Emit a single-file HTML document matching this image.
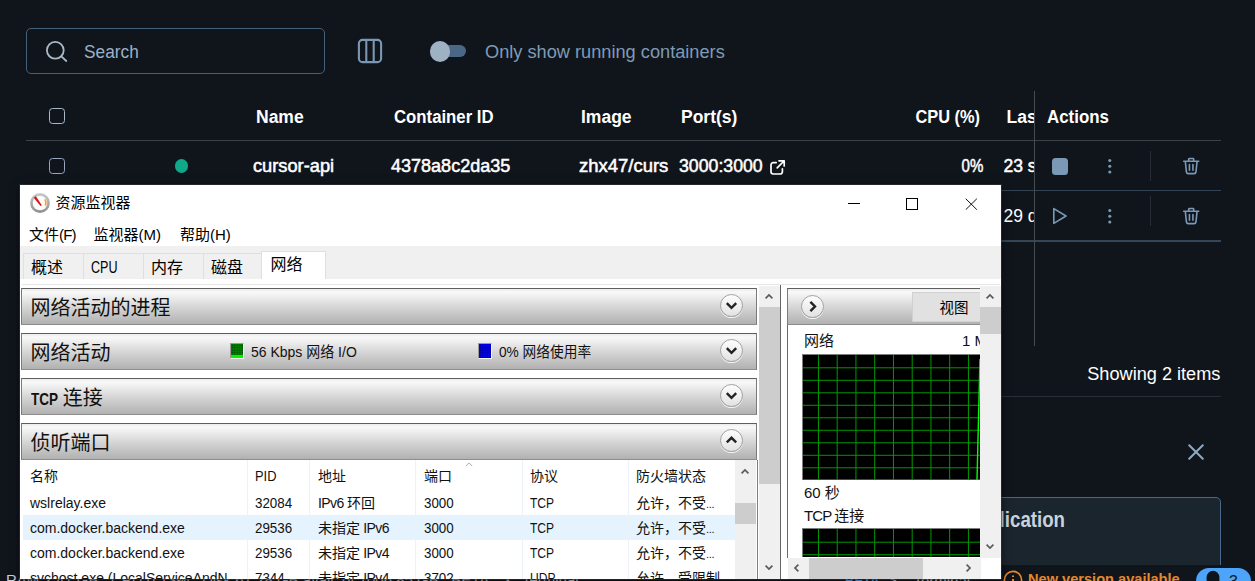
<!DOCTYPE html>
<html lang="zh">
<head>
<meta charset="utf-8">
<title>Containers</title>
<style>
*{box-sizing:border-box;margin:0;padding:0}
html,body{width:1255px;height:581px;overflow:hidden;background:#10151c}
body{position:relative;font-family:"Liberation Sans","Noto Sans CJK SC",sans-serif;color:#fff}
.a{position:absolute;white-space:nowrap}
.t{position:absolute;white-space:nowrap;line-height:20px;height:20px;font-size:17.5px}
.b{font-weight:bold}
.m{font-weight:normal;-webkit-text-stroke:.5px #fff}
/* docker */
.slate{color:#7f9bb5}
.hl{position:absolute;height:1px;background:#3c4148}
/* windows */
#win{position:absolute;left:20px;top:185px;width:981px;height:394px;background:#fff;color:#000;overflow:hidden;box-shadow:0 0 0 1px rgba(60,60,60,.5),0 2px 9px rgba(0,0,0,.55)}
#win .w{position:absolute;white-space:nowrap;font-size:15px;line-height:20px;height:20px;color:#000}
.bar{position:absolute;height:37px;border:1px solid #7b7b7b;border-top-color:#5e5e5e;border-bottom-color:#8d8d8d;background:linear-gradient(#ececec 0%,#f9f9f9 9%,#e9e9e9 28%,#d3d3d3 55%,#b1b1b1 100%)}
.bar .ttl{position:absolute;left:8.5px;top:7px;font-size:20px;line-height:24px;white-space:nowrap;color:#111}
.chev{position:absolute;width:23px;height:23px;border-radius:50%;border:1.3px solid #a2a2a2;background:linear-gradient(#fdfdfd,#e2e2e2);box-shadow:0 1px 0 rgba(255,255,255,.8)}
.chev svg{position:absolute;left:0;top:0}
.tab{position:absolute;top:68px;height:26px;background:#f0f0f0;border:1px solid #dfdfdf;border-bottom:none}
.sb{position:absolute;background:#f0f0f0}
.th{position:absolute;background:#cdcdcd}
.cs{position:absolute;top:275px;width:1px;height:120px;background:#ecf2f8}
.r{position:absolute;white-space:nowrap;font-size:14px;line-height:20px;height:20px;color:#111}
</style>
</head>
<body>
<!-- ================= Docker Desktop background ================= -->
<div class="a" style="left:26px;top:28px;width:299px;height:46px;border:1px solid #456079;border-radius:5px"></div>
<svg class="a" style="left:44px;top:39px" width="26" height="26" viewBox="0 0 26 26"><circle cx="11.3" cy="11.3" r="8.4" fill="none" stroke="#a9b9c8" stroke-width="1.8"/><path d="M17.6 17.6L22.3 22" stroke="#a9b9c8" stroke-width="1.8" stroke-linecap="round"/></svg>
<div class="t" style="left:83.5px;top:41.5px;font-size:18px;color:#9ab0c6;transform:scaleX(.96);transform-origin:0 0">Search</div>
<svg class="a" style="left:357px;top:38px" width="26" height="26" viewBox="0 0 26 26"><rect x="1.9" y="1.9" width="22.2" height="22.2" rx="3.6" fill="none" stroke="#7a97b3" stroke-width="2.1"/><path d="M9.3 2v22M16.7 2v22" stroke="#7a97b3" stroke-width="2.1"/></svg>
<div class="a" style="left:434px;top:45px;width:32px;height:12px;border-radius:6px;background:#4a6886"></div>
<div class="a" style="left:429.5px;top:41px;width:20.5px;height:20.5px;border-radius:50%;background:#9fb2c4"></div>
<div class="t slate" id="only" style="transform:scaleX(1.04);transform-origin:0 0;left:484.5px;top:42px">Only show running containers</div>

<div class="a" style="left:49px;top:108px;width:16px;height:16px;border:1.6px solid #a9b9c8;border-radius:3.5px"></div>
<div class="t b" id="hName" style="left:256px;top:107px">Name</div>
<div class="t b" id="hCid" style="transform:scaleX(.957);transform-origin:0 0;left:393.5px;top:107px">Container ID</div>
<div class="t b" id="hImg" style="left:581px;top:107px">Image</div>
<div class="t b" id="hPort" style="left:681px;top:107px">Port(s)</div>
<div class="t b" id="hCpu" style="transform:scaleX(.936);transform-origin:100% 0;right:274.5px;top:107px">CPU (%)</div>
<div class="t b" id="hLas" style="left:1006.5px;top:107px;width:27.5px;overflow:hidden">Last started</div>
<div class="t b" id="hAct" style="transform:scaleX(.965);transform-origin:0 0;left:1047px;top:107px">Actions</div>
<div class="hl" style="left:26px;top:140px;width:1195px"></div>

<!-- row 1 -->
<div class="a" style="left:49px;top:158px;width:16px;height:16px;border:1.6px solid #93a8bc;border-radius:3.5px"></div>
<div class="a" style="left:174.5px;top:159px;width:13.5px;height:13.5px;border-radius:50%;background:#0fa98a"></div>
<div class="t m" id="r1name" style="transform:scaleX(1.042);transform-origin:0 0;left:253px;top:156px">cursor-api</div>
<div class="t m" id="r1cid" style="transform:scaleX(1.03);transform-origin:0 0;left:391px;top:156px">4378a8c2da35</div>
<div class="t m" id="r1img" style="transform:scaleX(1.055);transform-origin:0 0;left:578.5px;top:156px">zhx47/curs</div>
<div class="t m" id="r1port" style="transform:scaleX(1.012);transform-origin:0 0;left:678.5px;top:156px">3000:3000</div>
<svg class="a" style="left:769px;top:159px" width="17" height="17" viewBox="0 0 17 17" fill="none" stroke="#fff" stroke-width="1.7" stroke-linecap="round" stroke-linejoin="round"><path d="M7.2 3.6H4.2a2.2 2.2 0 0 0-2.2 2.2v7a2.2 2.2 0 0 0 2.2 2.2h7a2.2 2.2 0 0 0 2.2-2.2V9.8"/><path d="M10 1.8h5.2V7M15 2L8.2 8.8"/></svg>
<div class="t m" id="r1cpu" style="transform:scaleX(0.86);transform-origin:100% 0;right:272px;top:156px">0%</div>
<div class="t m" style="left:1003.5px;top:156px;width:30.5px;overflow:hidden">23 seconds ago</div>
<div class="a" style="left:1052px;top:158px;width:16px;height:16.5px;border-radius:3.5px;background:#7b98b6"></div>
<svg class="a" style="left:1105px;top:157px" width="10" height="18" viewBox="0 0 10 18" fill="#7b98b6"><circle cx="4.8" cy="3.5" r="1.55"/><circle cx="4.8" cy="9.2" r="1.55"/><circle cx="4.8" cy="15" r="1.55"/></svg>
<div class="a" style="left:1150px;top:151px;width:1px;height:30px;background:#262d36"></div>
<svg class="a tr" style="left:1181.5px;top:156.5px" width="18.4" height="18.4" viewBox="0 0 20 20" fill="none" stroke="#7b98b6" stroke-width="1.75" stroke-linecap="round" stroke-linejoin="round"><path d="M1.8 4.6h16.4M7.3 4.4V2.4a.8.8 0 0 1 .8-.8h3.8a.8.8 0 0 1 .8.8v2M3.6 4.8l1.2 11.3a2.2 2.2 0 0 0 2.2 2h6a2.2 2.2 0 0 0 2.2-2l1.2-11.3M8.1 8.2v6.2M11.9 8.2v6.2"/></svg>
<div class="hl" style="left:26px;top:190px;width:1195px;background:#324454"></div>

<!-- row 2 -->
<div class="t" style="left:1003.5px;top:206px;width:30.5px;overflow:hidden">29 days ago</div>
<svg class="a" style="left:1051px;top:206px" width="18" height="20" viewBox="0 0 18 20" fill="none" stroke="#7b98b6" stroke-width="1.6" stroke-linejoin="round"><path d="M2.8 2.6L15 10 2.8 17.4z"/></svg>
<svg class="a" style="left:1105px;top:207px" width="10" height="18" viewBox="0 0 10 18" fill="#7b98b6"><circle cx="4.8" cy="3.5" r="1.55"/><circle cx="4.8" cy="9.2" r="1.55"/><circle cx="4.8" cy="15" r="1.55"/></svg>
<div class="a" style="left:1150px;top:196px;width:1px;height:30px;background:#262d36"></div>
<svg class="a tr" style="left:1181.5px;top:206.5px" width="18.4" height="18.4" viewBox="0 0 20 20" fill="none" stroke="#7b98b6" stroke-width="1.75" stroke-linecap="round" stroke-linejoin="round"><path d="M1.8 4.6h16.4M7.3 4.4V2.4a.8.8 0 0 1 .8-.8h3.8a.8.8 0 0 1 .8.8v2M3.6 4.8l1.2 11.3a2.2 2.2 0 0 0 2.2 2h6a2.2 2.2 0 0 0 2.2-2l1.2-11.3M8.1 8.2v6.2M11.9 8.2v6.2"/></svg>
<div class="hl" style="left:26px;top:240px;width:1195px;height:2px;background:#354656"></div>

<div class="a" style="left:1034px;top:91px;width:1px;height:255px;background:#474b51"></div>
<div class="t" id="showing" style="transform:scaleX(1.037);transform-origin:100% 0;right:34.5px;top:364px">Showing 2 items</div>
<div class="hl" style="left:26px;top:396px;width:1195px;background:#272e37"></div>
<svg class="a" style="left:1186px;top:442px" width="20" height="20" viewBox="0 0 20 20" fill="none" stroke="#8fa9c4" stroke-width="2" stroke-linecap="round"><path d="M3.2 3.2l13.6 13.6M16.8 3.2L3.2 16.8"/></svg>

<div class="a" style="left:26px;top:497px;width:1195px;height:90px;border:1px solid #48678a;border-radius:5px;background:#1b252d"></div>
<div class="a b" id="lic" style="right:189.5px;top:506.5px;font-size:22px;line-height:26px;color:#c9d3dd;transform:scaleX(.85);transform-origin:100% 0">Containerize your application</div>

<!-- status bar -->
<div class="a" style="left:0;top:565px;width:1255px;height:16px;background:#10151c"></div>
<div class="a" style="left:6px;top:571px;font-size:15px;line-height:18px;color:#c5d0dc">RAM 2.41 GB &nbsp; CPU 0.13% &nbsp; Disk 61.28 GB avail. of 1006.85 GB &nbsp; BETA &nbsp; &gt;_ Terminal</div>
<div class="a b" style="left:845px;top:573px;font-size:13px;line-height:16px;color:#4da5fb">BETA</div><div class="a" style="left:888px;top:572px;font-size:15px;line-height:18px;color:#dfe6ee">&gt;_ &nbsp;Terminal</div>
<svg class="a" style="left:1003px;top:570px" width="20" height="20" viewBox="0 0 20 20" fill="none" stroke="#e8872b" stroke-width="1.6"><circle cx="10" cy="10" r="8.6"/><path d="M10 9v5.5M10 5.6v1.4" stroke-width="2"/></svg>
<div class="a b" id="newv" style="left:1028px;top:570px;font-size:14.6px;line-height:18px;color:#e8872b">New version available</div>
<div class="a" style="left:1196px;top:567.5px;width:55px;height:26px;border-radius:13px;background:#4da5fb"></div>
<svg class="a" style="left:1206.3px;top:570.3px" width="14" height="14" viewBox="0 0 14 14" fill="#0e141b"><path d="M.6 14V7.200a6.400 6.400 0 0 1 12.800 0V14z"/></svg>
<div class="a" style="left:1229px;top:572px;font-size:16px;line-height:20px;color:#111a24">3</div>

<!-- ================= Resource Monitor window ================= -->
<div id="win">
  <!-- title bar -->
  <svg class="a" style="left:9px;top:7px" width="22" height="22" viewBox="0 0 22 22"><defs><linearGradient id="rg" x1="0" y1="0" x2="0" y2="1"><stop offset="0" stop-color="#c9c9c9"/><stop offset="1" stop-color="#8e8e8e"/></linearGradient></defs><circle cx="11" cy="11" r="9.900" fill="url(#rg)"/><circle cx="11" cy="11" r="7.300" fill="#fbfbf8"/><path d="M15.800 7.200a6.200 6.200 0 0 1 .5 6.400" stroke="#f3a04a" stroke-width="1.500" fill="none"/><path d="M4.700 5.800L6.900 4.200 12.800 13.200 11.600 14z" fill="#d4141c"/></svg>
  <div class="w" id="title" style="left:35.500px;top:8px;font-size:15px">资源监视器</div>
  <div class="a" style="left:828px;top:18px;width:12px;height:1px;background:#000"></div>
  <div class="a" style="left:886px;top:13px;width:12px;height:12px;border:1px solid #000"></div>
  <svg class="a" style="left:944.5px;top:13px" width="12.6" height="12.4" preserveAspectRatio="none" viewBox="0 0 14 14" stroke="#000" stroke-width="1.050"><path d="M.8 .8L13.200 13.200M13.200 .8L.8 13.200"/></svg>
  <!-- menu -->
  <div class="w" id="m1" style="left:9px;top:40px">文件<span style="letter-spacing:-.8px">(F)</span></div>
  <div class="w" id="m2" style="left:73.500px;top:40px">监视器(M)</div>
  <div class="w" id="m3" style="left:160px;top:40px">帮助(H)</div>
  <!-- tab strip -->
  <div class="a" style="left:0;top:61px;width:981px;height:33px;background:#f0f0f0"></div>
  <div class="tab" style="left:3px;width:61px"></div>
  <div class="tab" style="left:63px;width:61px"></div>
  <div class="tab" style="left:123px;width:61px"></div>
  <div class="tab" style="left:183px;width:59px"></div>
  <div class="tab" style="left:241px;width:64.500px;top:65.500px;height:28.5px;background:#fff"></div>
  <div class="w" style="left:11px;top:72.6px;font-size:16px">概述</div>
  <div class="w" style="left:71px;top:72.5px;font-size:16px;transform:scaleX(.785);transform-origin:0 0">CPU</div>
  <div class="w" style="left:131px;top:72.6px;font-size:16px">内存</div>
  <div class="w" style="left:191px;top:72.6px;font-size:16px">磁盘</div>
  <div class="w" style="left:250.500px;top:70px;font-size:16px">网络</div>
  <div class="a" style="left:2px;top:99px;width:978px;height:1px;background:#e6e6e6"></div>

  <!-- left pane bars -->
  <div class="bar" style="left:1px;top:103px;width:736px"><div class="ttl">网络活动的进程</div></div>
  <div class="bar" style="left:1px;top:148px;width:736px"><div class="ttl">网络活动</div></div>
  <div class="bar" style="left:1px;top:193px;width:736px"><div class="ttl"><b style="font-size:16.5px;display:inline-block;transform:scaleX(.82);transform-origin:0 50%;margin-right:-6.2px">TCP</b> 连接</div></div>
  <div class="bar" style="left:1px;top:238px;width:736px"><div class="ttl">侦听端口</div></div>
  <div class="chev" style="left:699.500px;top:109px"><svg width="21" height="21" viewBox="0 0 21 21" fill="none" stroke="#222" stroke-width="2.400"><path d="M5.800 8.200l4.700 4.600 4.700-4.600"/></svg></div>
  <div class="chev" style="left:699.500px;top:154px"><svg width="21" height="21" viewBox="0 0 21 21" fill="none" stroke="#222" stroke-width="2.400"><path d="M5.800 8.200l4.700 4.600 4.700-4.600"/></svg></div>
  <div class="chev" style="left:699.500px;top:199px"><svg width="21" height="21" viewBox="0 0 21 21" fill="none" stroke="#222" stroke-width="2.400"><path d="M5.800 8.200l4.700 4.600 4.700-4.600"/></svg></div>
  <div class="chev" style="left:699.500px;top:244px"><svg width="21" height="21" viewBox="0 0 21 21" fill="none" stroke="#222" stroke-width="2.400"><path d="M5.800 12.400l4.700-4.600 4.700 4.600"/></svg></div>
  <!-- legend in bar 2 -->
  <div class="a" style="left:209.5px;top:158px;width:14px;height:15.5px;border:1px solid #f4f4f4;border-top-color:#9a9a9a;border-left-color:#9a9a9a;background:linear-gradient(#007c00 0 76%,#00f400 76% 100%)"></div>
  <div class="a" style="left:210.5px;top:159px;width:12px;height:10.5px;background:radial-gradient(circle at 50% 50%,rgba(0,0,0,.55) 0 .55px,transparent .9px) 0 0/2.5px 2.5px"></div>
  <div class="r" id="kb" style="transform:scaleX(.965);transform-origin:0 0;left:230.500px;top:156.500px;font-size:14.500px">56 Kbps 网络 I/O</div>
  <div class="a" style="left:458px;top:158px;width:14px;height:15.5px;border:1px solid #f4f4f4;border-top-color:#9a9a9a;border-left-color:#9a9a9a;background:#0000e2"></div>
  <div class="a" style="left:459px;top:159px;width:12px;height:13.5px;background:radial-gradient(circle at 50% 50%,rgba(0,0,0,.55) 0 .55px,transparent .9px) 0 0/2.5px 2.5px"></div>
  <div class="r" id="use" style="transform:scaleX(.945);transform-origin:0 0;left:478.500px;top:156.500px;font-size:14.500px">0% 网络使用率</div>

  <!-- listening ports table -->
  <div class="a" style="left:2.5px;top:330px;width:712.5px;height:24.500px;background:#e5f3ff"></div>
  <div class="cs" style="left:227px"></div><div class="cs" style="left:289px"></div><div class="cs" style="left:395px"></div><div class="cs" style="left:501.500px"></div><div class="cs" style="left:608px"></div>
  <div class="r" style="left:10px;top:280.500px">名称</div>
  <div class="r" style="left:235px;top:280.500px;transform:scaleX(.92);transform-origin:0 0">PID</div>
  <div class="r" style="left:298px;top:280.500px">地址</div>
  <div class="r" style="left:404px;top:280.500px">端口</div>
  <div class="r" style="left:510px;top:280.500px">协议</div>
  <div class="r" style="left:616px;top:280.500px">防火墙状态</div>
  <svg class="a" style="left:444.5px;top:276.5px" width="8" height="5" viewBox="0 0 10 6" fill="none" stroke="#a8a8a8" stroke-width="1.2"><path d="M1 5l4-4 4 4"/></svg>

  <div class="r" style="left:10px;top:308px">wslrelay.exe</div>
  <div class="r" style="left:235px;top:308px;transform:scaleX(.955);transform-origin:0 0">32084</div>
  <div class="r" style="left:298px;top:308px"><span style="letter-spacing:-.6px">IPv6 </span>环回</div>
  <div class="r" style="left:404px;top:308px;transform:scaleX(.955);transform-origin:0 0">3000</div>
  <div class="r" style="left:510px;top:308px;transform:scaleX(.86);transform-origin:0 0">TCP</div>
  <div class="r" style="left:616px;top:308px">允许，不受<span style="font-size:11px;letter-spacing:-.3px">...</span></div>

  <div class="r" style="left:10px;top:333px">com.docker.backend.exe</div>
  <div class="r" style="left:235px;top:333px;transform:scaleX(.955);transform-origin:0 0">29536</div>
  <div class="r" style="left:298px;top:333px">未指定<span style="letter-spacing:-.6px"> IPv6</span></div>
  <div class="r" style="left:404px;top:333px;transform:scaleX(.955);transform-origin:0 0">3000</div>
  <div class="r" style="left:510px;top:333px;transform:scaleX(.86);transform-origin:0 0">TCP</div>
  <div class="r" style="left:616px;top:333px">允许，不受<span style="font-size:11px;letter-spacing:-.3px">...</span></div>

  <div class="r" style="left:10px;top:358px">com.docker.backend.exe</div>
  <div class="r" style="left:235px;top:358px;transform:scaleX(.955);transform-origin:0 0">29536</div>
  <div class="r" style="left:298px;top:358px">未指定<span style="letter-spacing:-.6px"> IPv4</span></div>
  <div class="r" style="left:404px;top:358px;transform:scaleX(.955);transform-origin:0 0">3000</div>
  <div class="r" style="left:510px;top:358px;transform:scaleX(.86);transform-origin:0 0">TCP</div>
  <div class="r" style="left:616px;top:358px">允许，不受<span style="font-size:11px;letter-spacing:-.3px">...</span></div>

  <div class="r" style="left:10px;top:383px">svchost.exe (LocalServiceAndN...</div>
  <div class="r" style="left:235px;top:383px;transform:scaleX(.955);transform-origin:0 0">7344</div>
  <div class="r" style="left:298px;top:383px">未指定<span style="letter-spacing:-.6px"> IPv4</span></div>
  <div class="r" style="left:404px;top:383px;transform:scaleX(.955);transform-origin:0 0">3702</div>
  <div class="r" style="left:510px;top:383px;transform:scaleX(.86);transform-origin:0 0">UDP</div>
  <div class="r" style="left:616px;top:383px">允许，受限制</div>

  <div class="a" style="left:736.5px;top:275px;width:1px;height:120px;background:#7d7d7d"></div>
  <!-- table scrollbar -->
  <div class="sb" style="left:715px;top:275px;width:20.500px;height:120px"></div>
  <div class="th" style="left:715px;top:318px;width:20.500px;height:20.500px"></div>
  <svg class="a" style="left:720.2px;top:282.8px" width="10" height="7" viewBox="0 0 10 7" fill="none" stroke="#5a5a5a" stroke-width="1.7"><path d="M1.6 5.4L5 2l3.400 3.400"/></svg>

  <!-- left pane scrollbar -->
  <div class="sb" style="left:739px;top:100.500px;width:20.7px;height:294px"></div>
  <div class="th" style="left:739px;top:122px;width:20.7px;height:176.5px"></div>
  <svg class="a" style="left:744.3px;top:108.3px" width="10" height="7" viewBox="0 0 10 7" fill="none" stroke="#5a5a5a" stroke-width="1.7"><path d="M1.6 5.4L5 2l3.400 3.400"/></svg>
  <svg class="a" style="left:743.8px;top:379.3px" width="10" height="7" viewBox="0 0 10 7" fill="none" stroke="#5a5a5a" stroke-width="1.7"><path d="M1.6 1.6L5 5l3.400-3.400"/></svg>
  <div class="a" style="left:760px;top:100px;width:1px;height:294px;background:#666"></div>

  <!-- right pane -->
  <div class="a" style="left:767px;top:103px;width:1px;height:270px;background:#6a6a6a"></div>
  <div class="bar" style="left:767px;top:103px;width:193px;border-right:none"></div>
  <div class="chev" style="left:781px;top:109.500px"><svg width="21" height="21" viewBox="0 0 21 21" fill="none" stroke="#222" stroke-width="2.400"><path d="M8.400 5.800l4.600 4.700-4.600 4.700"/></svg></div>
  <div class="a" style="left:892px;top:106.500px;width:68px;height:30.500px;background:#e1e1e1;border:1px solid #d0d0d0;border-right:none"></div>
  <div class="w" style="left:919.5px;top:112.5px;font-size:14.5px">视图</div>
  <div class="r" style="left:784px;top:146px;font-size:15px">网络</div>
  <div class="r" style="left:942px;top:146px;font-size:15px;width:18px;overflow:hidden">1 Mbps</div>
  <!-- graph 1 -->
  <svg class="a" style="left:781.8px;top:168.8px" width="178.2" height="126.4" viewBox="0 0 178.2 126.4"><rect width="178.2" height="126.4" fill="#000"/><path d="M16.45 0V126.4M35.20 0V126.4M53.95 0V126.4M72.70 0V126.4M91.45 0V126.4M110.20 0V126.4M128.95 0V126.4M147.70 0V126.4M166.45 0V126.4M0 13.80H178.2M0 26.30H178.2M0 38.80H178.2M0 51.30H178.2M0 63.80H178.2M0 76.30H178.2M0 88.80H178.2M0 101.30H178.2M0 113.80H178.2M0 125.70H178.2" stroke="#009a00" stroke-width="1" fill="none"/><path d="M0 .5H178.2M.5 0V126.4" stroke="#7f7f7f" stroke-width="1" fill="none"/><path d="M178 5C177.300 40 176 80 175 126.400" stroke="#00ff00" stroke-width="1.400" fill="none"/></svg>
  <div class="r" style="left:784px;top:298px;font-size:15px">60 秒</div>
  <div class="r" style="left:784px;top:320.500px;font-size:15px"><span style="letter-spacing:-.9px">TCP </span>连接</div>
  <svg class="a" style="left:781.8px;top:343.3px" width="178.2" height="29.2" viewBox="0 0 178.2 29.2"><rect width="178.2" height="29.2" fill="#000"/><path d="M16.45 0V29.2M35.20 0V29.2M53.95 0V29.2M72.70 0V29.2M91.45 0V29.2M110.20 0V29.2M128.95 0V29.2M147.70 0V29.2M166.45 0V29.2M0 14.20H178.2M0 26.70H178.2" stroke="#009a00" stroke-width="1" fill="none"/><path d="M0 .5H178.2M.5 0V29.2" stroke="#7f7f7f" stroke-width="1" fill="none"/></svg>
  <!-- right pane scrollbars -->
  <div class="sb" style="left:960px;top:100.500px;width:21px;height:272px"></div>
  <div class="th" style="left:960px;top:122px;width:21px;height:26.7px"></div>
  <svg class="a" style="left:964.75px;top:108.3px" width="10" height="7" viewBox="0 0 10 7" fill="none" stroke="#5a5a5a" stroke-width="1.7"><path d="M1.6 5.4L5 2l3.400 3.400"/></svg>
  <svg class="a" style="left:965px;top:357.7px" width="10" height="7" viewBox="0 0 10 7" fill="none" stroke="#5a5a5a" stroke-width="1.7"><path d="M1.6 1.6L5 5l3.400-3.400"/></svg>
  <div class="sb" style="left:767.500px;top:372.500px;width:193px;height:22px"></div>
  <div class="th" style="left:788.500px;top:372.500px;width:114.500px;height:22px"></div>
  <svg class="a" style="left:773.05px;top:377.75px" width="7" height="10" viewBox="0 0 7 10" fill="none" stroke="#5a5a5a" stroke-width="1.7"><path d="M5.400 1.600L2 5l3.400 3.400"/></svg>
  <svg class="a" style="left:944.7px;top:377.75px" width="7" height="10" viewBox="0 0 7 10" fill="none" stroke="#5a5a5a" stroke-width="1.7"><path d="M1.600 1.600L5 5 1.600 8.400"/></svg>
</div>
</body>
</html>
